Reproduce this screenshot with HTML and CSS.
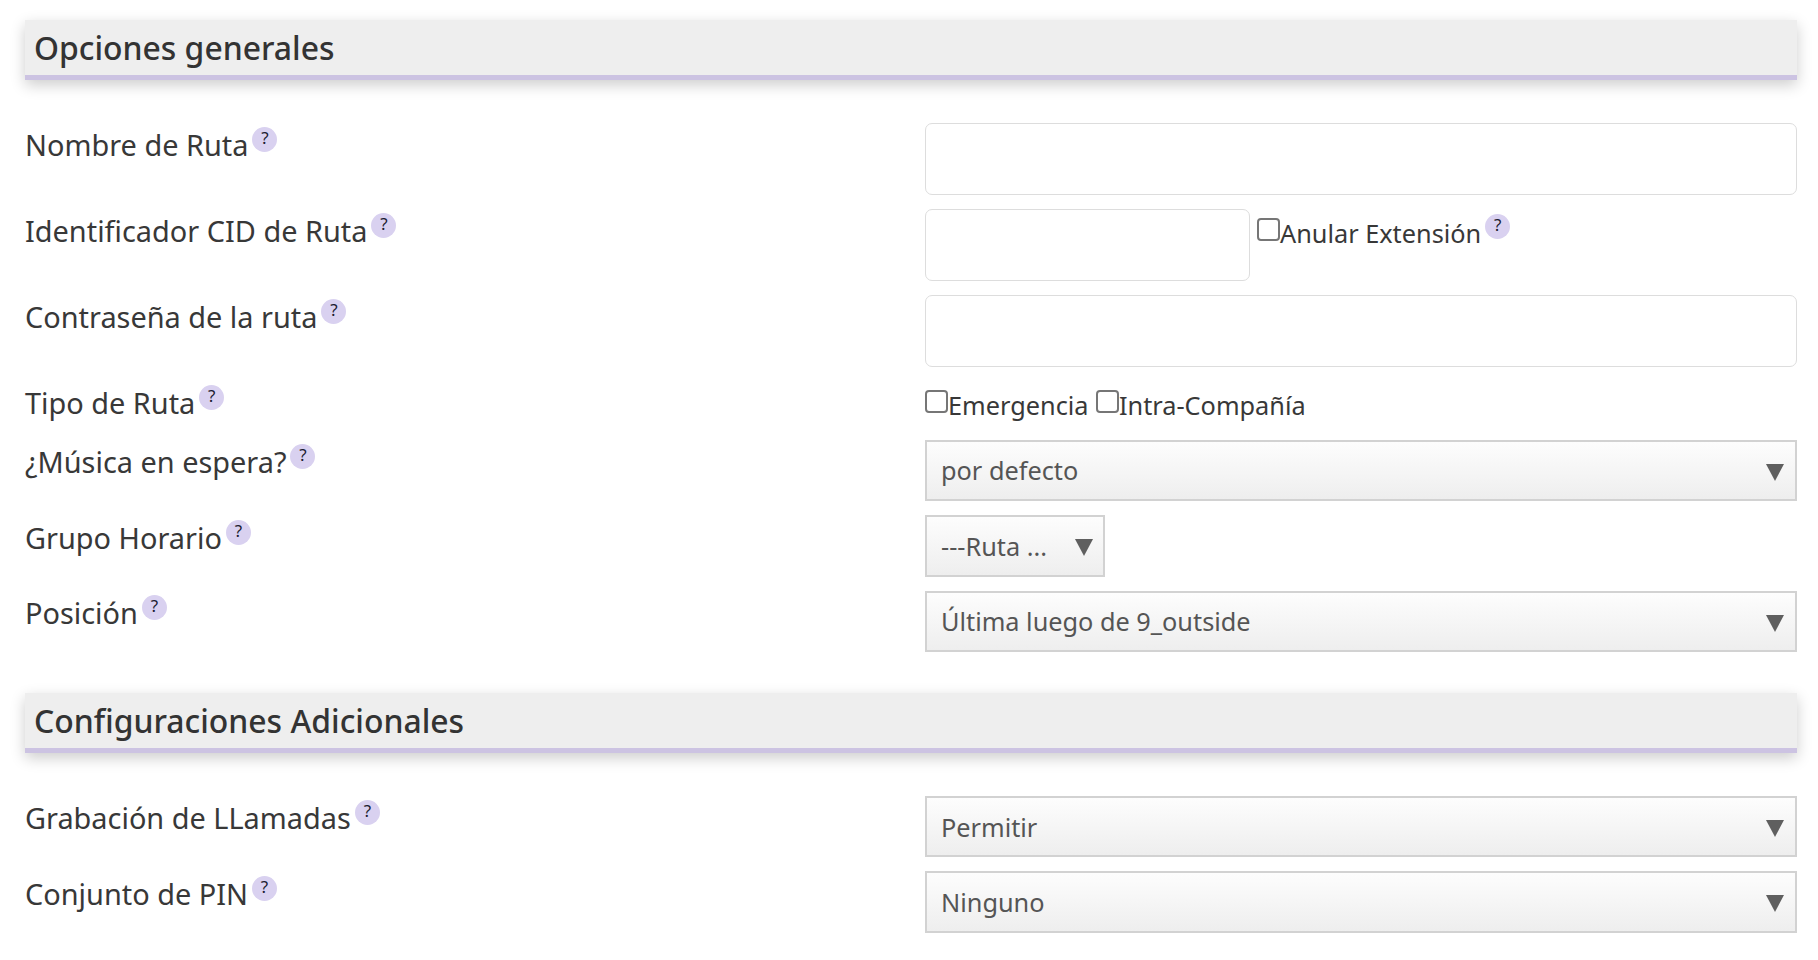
FILE: index.html
```html
<!DOCTYPE html>
<html lang="es">
<head>
<meta charset="utf-8">
<title>Ruta</title>
<link rel="stylesheet" href="styles.css">
</head>
<body>
<main class="page">
  <section class="section">
    <h2 class="section-title">Opciones generales</h2>
    <div class="rows">
      <div class="row row-input">
        <label class="label">Nombre de Ruta<span class="help">?</span></label>
        <div class="field"><input class="text-input" type="text"></div>
      </div>
      <div class="row row-input">
        <label class="label">Identificador CID de Ruta<span class="help">?</span></label>
        <div class="field field-inline">
          <input class="text-input text-input-short" type="text">
          <label class="check check-override"><input class="checkbox" type="checkbox">Anular Extensión<span class="help">?</span></label>
        </div>
      </div>
      <div class="row row-input">
        <label class="label">Contraseña de la ruta<span class="help">?</span></label>
        <div class="field"><input class="text-input" type="password"></div>
      </div>
      <div class="row row-check">
        <label class="label">Tipo de Ruta<span class="help">?</span></label>
        <div class="field field-checks">
          <label class="check"><input class="checkbox" type="checkbox">Emergencia</label>
          <label class="check"><input class="checkbox" type="checkbox">Intra-Compañía</label>
        </div>
      </div>
      <div class="row">
        <label class="label">¿Música en espera?<span class="help">?</span></label>
        <div class="field"><div class="select-wrap"><select class="select"><option>por defecto</option></select></div></div>
      </div>
      <div class="row">
        <label class="label">Grupo Horario<span class="help">?</span></label>
        <div class="field"><div class="select-wrap select-wrap-short"><select class="select"><option>---Ruta ...</option></select></div></div>
      </div>
      <div class="row">
        <label class="label">Posición<span class="help">?</span></label>
        <div class="field"><div class="select-wrap"><select class="select"><option>Última luego de 9_outside</option></select></div></div>
      </div>
    </div>
  </section>
  <section class="section section-second">
    <h2 class="section-title">Configuraciones Adicionales</h2>
    <div class="rows">
      <div class="row">
        <label class="label">Grabación de LLamadas<span class="help">?</span></label>
        <div class="field"><div class="select-wrap"><select class="select"><option>Permitir</option></select></div></div>
      </div>
      <div class="row">
        <label class="label">Conjunto de PIN<span class="help">?</span></label>
        <div class="field"><div class="select-wrap"><select class="select"><option>Ninguno</option></select></div></div>
      </div>
    </div>
  </section>
</main>
</body>
</html>
```
FILE: styles.css
```css
* { box-sizing: border-box; }
html, body { margin: 0; background: #fff; overflow: hidden; }
body {
  font-family: "Noto Sans", "Open Sans", sans-serif;
  color: #383838;
  font-size: 28.9px;
}
.page { padding: 20px 21px 0 25px; }
.section-title {
  margin: 0 0 42.9px;
  height: 60px;
  padding: 0 9px;
  font-size: 31.9px;
  font-weight: 500;
  line-height: 55px;
  color: #333;
  background: #eee;
  border-bottom: 5px solid #ccc3e2;
  box-shadow: 0 5px 14px rgba(0, 0, 0, 0.2);
}
.section-second { margin-top: 40.8px; }
.row {
  display: grid;
  grid-template-columns: 900px 1fr;
  margin-bottom: 14px;
}
.row-check { margin-bottom: 14.8px; }
.label {
  display: block;
  padding-top: 4.4px;
  line-height: 36px;
  white-space: nowrap;
}
.help {
  display: inline-block;
  vertical-align: top;
  width: 25px;
  height: 25px;
  margin: 0 0 0 4px;
  border-radius: 50%;
  background: #d9d1f0;
  color: #1c1c30;
  font-size: 17px;
  line-height: 22px;
  text-align: center;
}
.text-input {
  display: block;
  width: 100%;
  height: 72px;
  border: 1px solid #ddd;
  border-radius: 7px;
  background: #fff;
}
.field-inline { display: flex; gap: 7px; }
.text-input-short { width: 325px; flex: none; }
.check {
  display: inline-block;
  line-height: 36px;
  white-space: nowrap;
  font-size: 25.3px;
}
.check .help { margin-top: -1px; }
.check-override { padding-top: 6px; }
.field-checks { display: flex; gap: 7.5px; height: 44px; padding-top: 6px; }
.checkbox {
  appearance: none;
  display: inline-block;
  vertical-align: top;
  width: 23px;
  height: 23px;
  margin: 3px 0 0;
  border: 2px solid #767676;
  border-radius: 4px;
  background: #fff;
}
.select-wrap { position: relative; height: 61.5px; }
.select-wrap-short { width: 180px; }
.select-wrap::after {
  content: "";
  position: absolute;
  top: 24px;
  right: 13px;
  border-left: 9px solid transparent;
  border-right: 9px solid transparent;
  border-top: 17px solid #5f5f5f;
  pointer-events: none;
}
.select-wrap-short::after { right: 12px; }
.select {
  appearance: none;
  display: block;
  width: 100%;
  height: 100%;
  padding: 0 40px 0 14px;
  border: 2px solid #d2d2d2;
  border-radius: 0;
  background: linear-gradient(#fdfdfd, #eee);
  color: #555;
  font-family: inherit;
  font-size: 25.3px;
}
```
